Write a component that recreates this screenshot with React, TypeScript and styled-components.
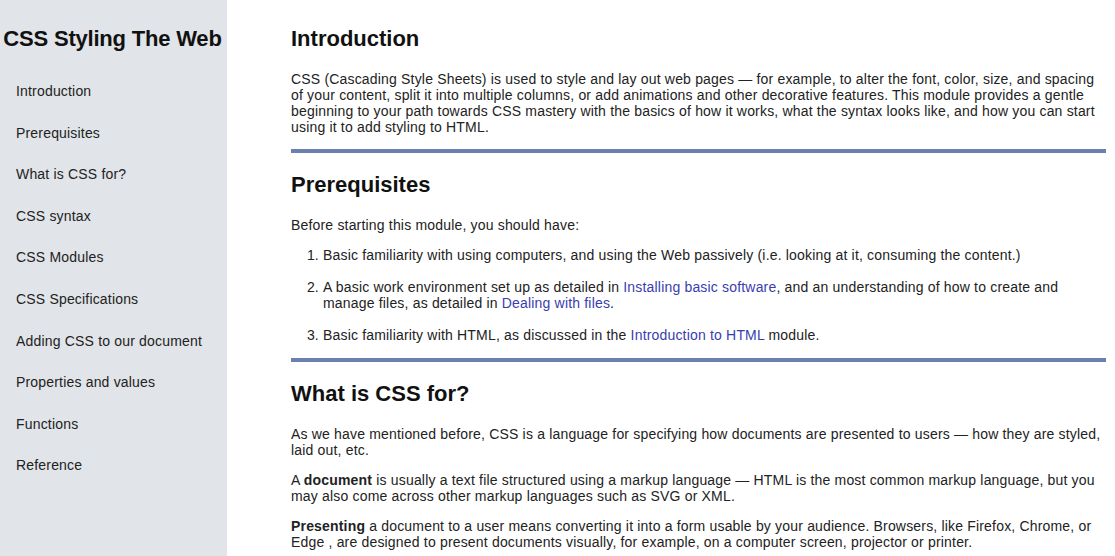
import styled, { createGlobalStyle } from 'styled-components';

const GlobalStyle = createGlobalStyle`
  html, body {
    margin: 0;
    padding: 0;
    background: #ffffff;
    font-family: "Liberation Sans", Arial, sans-serif;
  }
`;

const Page = styled.div`
  display: flex;
  min-height: 100vh;
`;

const Sidebar = styled.nav`
  width: 227px;
  flex-shrink: 0;
  background-color: #e1e4e8;
  padding-top: 26px;
  box-sizing: border-box;
`;

const SiteTitle = styled.h1`
  margin: 0 0 32px;
  font-size: 22px;
  line-height: 25px;
  font-weight: bold;
  letter-spacing: -0.2px;
  color: #111;
  text-align: center;
  padding-right: 2px;
`;

const NavList = styled.ul`
  list-style: none;
  margin: 0;
  padding: 0 0 0 16px;
  display: flex;
  flex-direction: column;
  gap: 25.6px;
`;

const NavItem = styled.li`
  font-size: 14px;
  line-height: 16px;
  letter-spacing: 0.18px;
  color: #222;
`;

const Main = styled.main`
  flex: 1;
  padding: 26px 9px 0 64px;
  color: #222;
  font-size: 14px;
  line-height: 16px;
  letter-spacing: 0.18px;
`;

const Heading = styled.h2`
  margin: 0 0 20px;
  font-size: 22px;
  line-height: 25px;
  font-weight: bold;
  letter-spacing: 0;
  color: #111;
`;

const Para = styled.p`
  margin: 0 0 14px;
`;

const Divider = styled.hr`
  border: none;
  height: 4px;
  background-color: #6c80b0;
  margin: 0 0 19px;
`;

const Steps = styled.ol`
  margin: 0 0 15px;
  padding-left: 32px;
`;

const Step = styled.li`
  margin-bottom: 16px;
  &:last-child {
    margin-bottom: 0;
  }
`;

const Link = styled.a`
  color: #3a3db0;
  text-decoration: none;
`;

const navItems = [
  'Introduction',
  'Prerequisites',
  'What is CSS for?',
  'CSS syntax',
  'CSS Modules',
  'CSS Specifications',
  'Adding CSS to our document',
  'Properties and values',
  'Functions',
  'Reference',
];

export default function App() {
  return (
    <>
      <GlobalStyle />
      <Page>
        <Sidebar>
          <SiteTitle>CSS Styling The Web</SiteTitle>
          <NavList>
            {navItems.map((item) => (
              <NavItem key={item}>{item}</NavItem>
            ))}
          </NavList>
        </Sidebar>
        <Main>
          <Heading>Introduction</Heading>
          <Para>
            CSS (Cascading Style Sheets) is used to style and lay out web pages — for example, to
            alter the font, color, size, and spacing of your content, split it into multiple
            columns, or add animations and other decorative features. This module provides a gentle
            beginning to your path towards CSS mastery with the basics of how it works, what the
            syntax looks like, and how you can start using it to add styling to HTML.
          </Para>
          <Divider />
          <Heading>Prerequisites</Heading>
          <Para>Before starting this module, you should have:</Para>
          <Steps>
            <Step>
              Basic familiarity with using computers, and using the Web passively (i.e. looking at
              it, consuming the content.)
            </Step>
            <Step>
              A basic work environment set up as detailed in{' '}
              <Link href="#">Installing basic software</Link>, and an understanding of how to
              create and manage files, as detailed in <Link href="#">Dealing with files</Link>.
            </Step>
            <Step>
              Basic familiarity with HTML, as discussed in the{' '}
              <Link href="#">Introduction to HTML</Link> module.
            </Step>
          </Steps>
          <Divider />
          <Heading>What is CSS for?</Heading>
          <Para>
            As we have mentioned before, CSS is a language for specifying how documents are
            presented to users — how they are styled, laid out, etc.
          </Para>
          <Para>
            A <b>document</b> is usually a text file structured using a markup language — HTML is
            the most common markup language, but you may also come across other markup languages
            such as SVG or XML.
          </Para>
          <Para>
            <b>Presenting</b> a document to a user means converting it into a form usable by your
            audience. Browsers, like Firefox, Chrome, or Edge , are designed to present documents
            visually, for example, on a computer screen, projector or printer.
          </Para>
        </Main>
      </Page>
    </>
  );
}
